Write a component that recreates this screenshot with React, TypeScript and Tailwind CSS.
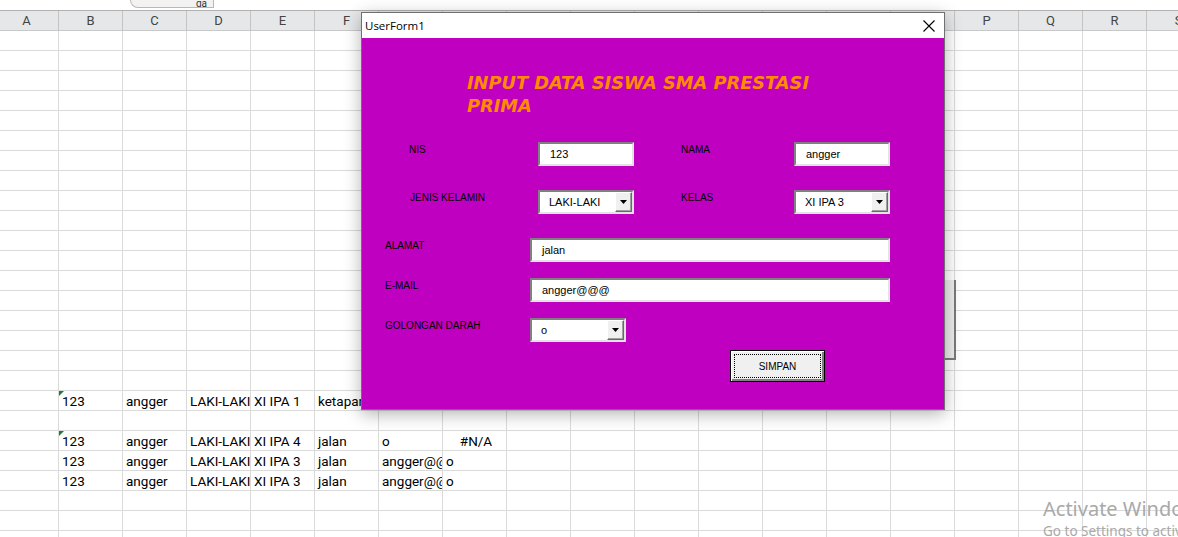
import React from "react";

const cols = "ABCDEFGHIJKLMNOPQRS".split("");

type Cell = { text: string; center?: boolean; flag?: boolean };

const data: Record<number, Record<number, Cell>> = {
  18: {
    1: { text: "123", flag: true },
    2: { text: "angger" },
    3: { text: "LAKI-LAKI" },
    4: { text: "XI IPA 1" },
    5: { text: "ketapang" },
  },
  20: {
    1: { text: "123", flag: true },
    2: { text: "angger" },
    3: { text: "LAKI-LAKI" },
    4: { text: "XI IPA 4" },
    5: { text: "jalan" },
    6: { text: "o" },
    7: { text: "#N/A", center: true },
  },
  21: {
    1: { text: "123" },
    2: { text: "angger" },
    3: { text: "LAKI-LAKI" },
    4: { text: "XI IPA 3" },
    5: { text: "jalan" },
    6: { text: "angger@@@" },
    7: { text: "o" },
  },
  22: {
    1: { text: "123" },
    2: { text: "angger" },
    3: { text: "LAKI-LAKI" },
    4: { text: "XI IPA 3" },
    5: { text: "jalan" },
    6: { text: "angger@@@" },
    7: { text: "o" },
  },
};

function TextBox({ value, width }: { value: string; width: string }) {
  return (
    <div
      className={`${width} h-[24px] bg-white border-2 border-t-[#808080] border-l-[#808080] border-b-[#e3e3e3] border-r-[#e3e3e3] flex items-center pl-[10px] text-[11px] text-black`}
    >
      {value}
    </div>
  );
}

function Combo({ value }: { value: string }) {
  return (
    <div className="w-[96px] h-[24px] bg-white border-2 border-t-[#808080] border-l-[#808080] border-b-[#e3e3e3] border-r-[#e3e3e3] flex items-stretch text-[11px] text-black">
      <div className="flex-1 flex items-center pl-[9px]">{value}</div>
      <div className="w-[17px] bg-[#f0f0f0] border border-t-white border-l-white border-b-[#696969] border-r-[#696969] shadow-[inset_-1px_-1px_0_#a0a0a0] flex items-center justify-center">
        <svg width="7" height="4" viewBox="0 0 7 4">
          <path d="M0 0H7L3.5 4Z" fill="#000" />
        </svg>
      </div>
    </div>
  );
}

function Label({ text, width }: { text: string; width: string }) {
  return (
    <div className={`${width} pt-[2px] text-[10px] leading-[12px] text-black`}>{text}</div>
  );
}

export default function App() {
  return (
    <div
      className="relative w-[1178px] h-[537px] overflow-hidden bg-white"
      style={{ fontFamily: "Roboto, 'Liberation Sans', sans-serif" }}
    >
      {/* ribbon remnant */}
      <div className="h-[11px] border-b border-[#b0b0b0] flex">
        <div className="ml-[130px] w-[84px] h-[8px] bg-[#f2f2f2] border border-t-0 border-[#b8b8b8] rounded-bl-[10px] overflow-hidden flex items-end justify-end pr-[6px]">
          <span className="text-[10px] leading-[6px] text-[#333]">ga</span>
        </div>
      </div>

      {/* column headers */}
      <div className="flex ml-[-5px] h-[20px] bg-[#e6e7e9] border-b border-[#c8c8c8]">
        {cols.map((c) => (
          <div
            key={c}
            className="w-[64px] shrink-0 border-r border-[#c3c3c3] flex items-center justify-center text-[13px] text-[#444]"
          >
            {c}
          </div>
        ))}
      </div>

      {/* grid */}
      <div className="ml-[-5px]">
        {Array.from({ length: 26 }).map((_, r) => (
          <div key={r} className="flex h-[20px]">
            {cols.map((c, ci) => {
              const cell = data[r]?.[ci];
              return (
                <div
                  key={c}
                  className={`relative w-[64px] shrink-0 border-r border-b border-[#dadada] overflow-hidden whitespace-nowrap flex items-end pl-[3px] text-[13.5px] leading-[17px] text-black ${
                    cell?.center ? "justify-center pl-0" : ""
                  }`}
                >
                  {cell?.flag && (
                    <span className="absolute left-0 top-0 w-0 h-0 border-t-[5px] border-t-[#1e7d32] border-r-[5px] border-r-transparent" />
                  )}
                  {cell?.text}
                </div>
              );
            })}
          </div>
        ))}
      </div>

      {/* shape behind the form */}
      <div className="absolute left-[880px] top-[280px] w-[76px] h-[80px] bg-[#ececec] border-r-2 border-b-2 border-[#7a7a7a]" />

      {/* UserForm */}
      <div
        className="absolute left-[361px] top-[12px] w-[584px] h-[398px] border border-[#707070] bg-[#c000c0] shadow-[0_4px_16px_rgba(0,0,0,0.3)] flex flex-col"
        style={{ fontFamily: "'Liberation Sans', Arial, sans-serif" }}
      >
        <div className="h-[25px] bg-white flex items-center justify-between pl-[3px] pr-[9px]">
          <span className="text-[11.5px] text-black" style={{ fontFamily: "'Open Sans', sans-serif" }}>
            UserForm1
          </span>
          <svg width="12" height="12" viewBox="0 0 12 12">
            <path d="M0.5 0.5L11.5 11.5M11.5 0.5L0.5 11.5" stroke="#000" strokeWidth="1.1" />
          </svg>
        </div>

        <div className="flex-1 flex flex-col">
          <div
            className="ml-[105px] mt-[33px] w-[380px] text-[17.8px] leading-[23px] font-bold italic text-[#ff8c00]"
            style={{ fontFamily: "'DejaVu Sans', Verdana, sans-serif" }}
          >
            INPUT DATA SISWA SMA PRESTASI PRIMA
          </div>

          <div className="flex mt-[25px] pl-[47px]">
            <Label text="NIS" width="w-[129px]" />
            <TextBox value="123" width="w-[96px]" />
            <div className="w-[47px]" />
            <Label text="NAMA" width="w-[113px]" />
            <TextBox value="angger" width="w-[96px]" />
          </div>

          <div className="flex mt-[24px] pl-[48px]">
            <Label text="JENIS KELAMIN" width="w-[128px]" />
            <Combo value="LAKI-LAKI" />
            <div className="w-[47px]" />
            <Label text="KELAS" width="w-[113px]" />
            <Combo value="XI IPA 3" />
          </div>

          <div className="flex mt-[24px] pl-[23px]">
            <Label text="ALAMAT" width="w-[145px]" />
            <TextBox value="jalan" width="w-[360px]" />
          </div>

          <div className="flex mt-[16px] pl-[23px]">
            <Label text="E-MAIL" width="w-[145px]" />
            <TextBox value="angger@@@" width="w-[360px]" />
          </div>

          <div className="flex mt-[16px] pl-[23px]">
            <Label text="GOLONGAN DARAH" width="w-[145px]" />
            <Combo value="o" />
          </div>

          <div className="flex mt-[8px] pl-[368px]">
            <div className="w-[95px] h-[32px] border border-black bg-[#f0f0f0] shadow-[inset_1px_1px_0_#ffffff,inset_-2px_-2px_0_#808080] p-[3px] flex">
              <div className="flex-1 border border-dotted border-black flex items-center justify-center text-[10px] text-black">
                SIMPAN
              </div>
            </div>
          </div>
        </div>
      </div>

      {/* watermark */}
      <div
        className="absolute left-[1043px] top-[496px] whitespace-nowrap text-[#a9a9a9]"
        style={{ fontFamily: "'Noto Sans', 'Open Sans', sans-serif" }}
      >
        <div className="text-[20px] leading-[26px]">Activate Windows</div>
        <div className="text-[13.5px] leading-[18px]">Go to Settings to activate Windows.</div>
      </div>
    </div>
  );
}
